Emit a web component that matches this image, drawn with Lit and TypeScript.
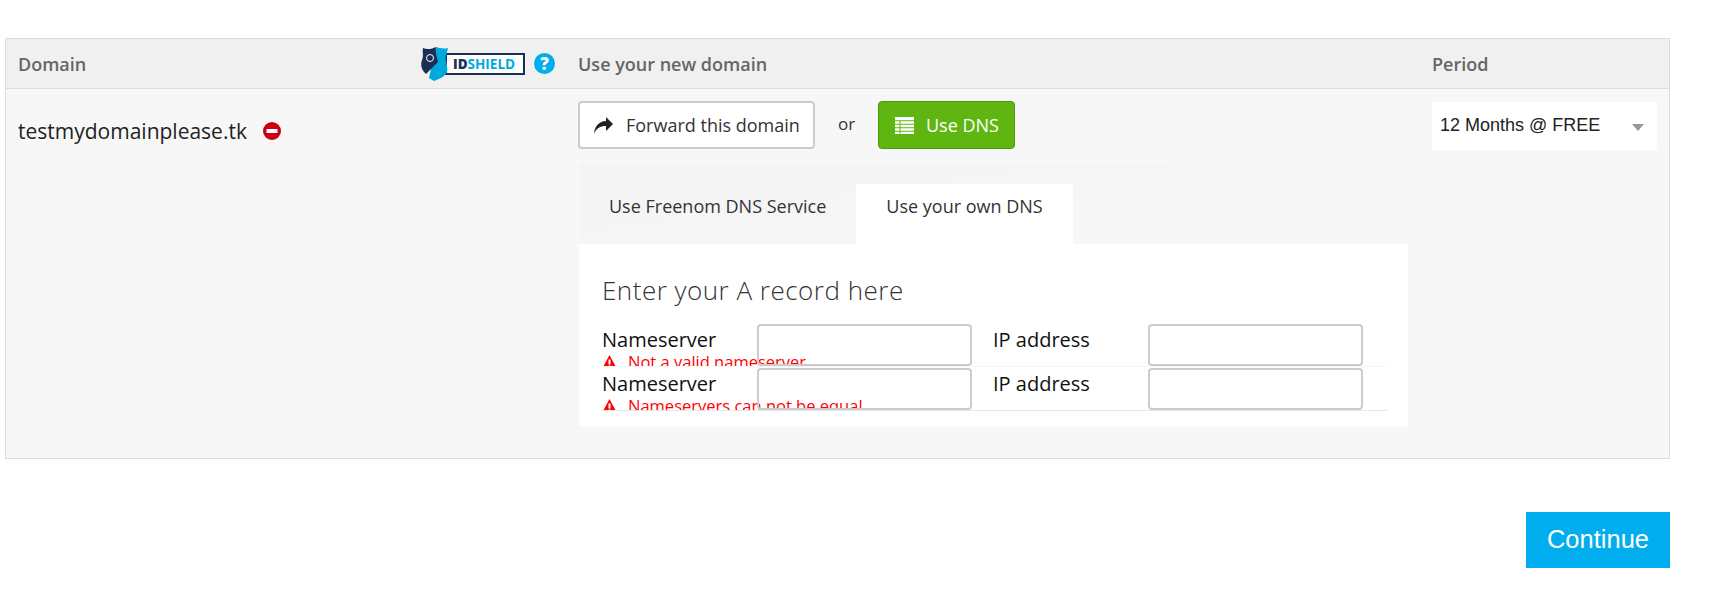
import { css, html, LitElement, svg } from "lit";
import { customElement } from "lit/decorators.js";

const forwardIcon = svg`<path d="M19 7 12 0v4C5 4.500.5 9 0 17c2-5.500 6-8 12-8v5z" fill="#222" />`;
const listIcon = svg`<path fill="#fff" d="M0 0h19v3.200H0zM0 4.200h4.500v2.500H0zM5.500 4.200H19v2.500H5.500zM0 7.700h4.500v2.500H0zM5.500 7.700H19v2.500H5.500zM0 11.200h4.500v2.500H0zM5.500 11.200H19v2.500H5.500zM0 14.700h4.500V17H0zM5.500 14.700H19V17H5.500z" />`;

@customElement("app-root")
export default class AppRoot extends LitElement {
  static styles = css`
    :host {
      display: block;
      padding: 38px 43px 0 5px;
      font-family: "Open Sans", sans-serif;
      color: #222;
    }

    .table {
      border: 1px solid #ddd;
      background: #f7f7f7;
      height: 421px;
      box-sizing: border-box;
    }

    .head,
    .body {
      display: grid;
      grid-template-columns: 572px 854px 1fr;
    }

    .head {
      height: 50px;
      box-sizing: border-box;
      border-bottom: 1px solid #ddd;
      background: #f0f0f0;
      align-items: center;
      font-size: 18px;
      font-weight: 600;
      color: #666;
    }

    .domain-head {
      display: flex;
      align-items: center;
      padding-left: 12px;
      padding-right: 23px;
    }

    .domain-head span {
      flex: 1;
    }

    .shield {
      display: flex;
      align-items: center;
      margin-right: 9px;
    }

    .shield svg {
      display: block;
      margin-right: -4px;
      position: relative;
    }

    .wordmark {
      width: 80px;
      height: 22px;
      box-sizing: border-box;
      border: 2px solid #1b2f55;
      background: #fff;
      font-size: 13.500px;
      line-height: 18px;
      font-weight: 700;
      color: #00a9dc;
      padding-left: 6px;
      white-space: nowrap;
    }

    .wordmark b {
      color: #1b2f55;
    }

    .help {
      width: 21px;
      height: 21px;
      border-radius: 50%;
      background: #00aeef;
      color: #fff;
      font-size: 17px;
      font-weight: 800;
      line-height: 21px;
      text-align: center;
    }

    .domain-name {
      display: flex;
      align-items: center;
      gap: 16px;
      padding: 28px 0 0 12px;
      height: 28px;
      font-size: 21px;
    }

    .stop {
      display: block;
    }

    .main {
      padding-top: 12px;
    }

    .choices {
      display: flex;
      align-items: center;
    }

    .btn {
      height: 48px;
      box-sizing: border-box;
      border-radius: 4px;
      display: flex;
      align-items: center;
      font-size: 18px;
      font-family: inherit;
    }

    .btn.forward {
      width: 237px;
      border: 2px solid #ccc;
      background: #fff;
      color: #333;
      padding-left: 14px;
      gap: 13px;
    }

    .or {
      width: 63px;
      text-align: center;
      font-size: 17px;
      color: #333;
      margin-top: -4px;
    }

    .btn.dns {
      width: 137px;
      border: 1px solid #4c9a0c;
      background: #5fb611;
      color: #fff;
      padding-left: 16px;
      gap: 12px;
    }

    .dns-area {
      margin: 15px 24px 0 1px;
      padding-top: 20px;
      background: linear-gradient(172deg, #f4f4f4 0%, #f7f7f7 45%);
    }

    .tabs {
      display: flex;
      height: 60px;
      font-size: 18px;
      color: #333;
    }

    .tab {
      padding: 10px 30px 0;
      line-height: 24px;
      border-radius: 3px 3px 0 0;
    }

    .tab.active {
      background: #fff;
    }

    .panel {
      background: #fff;
      border-radius: 0 0 4px 4px;
      height: 183px;
      box-sizing: border-box;
      padding: 28px 21px 0 23px;
    }

    h2 {
      margin: 0 0 15px;
      font-size: 26px;
      line-height: 36px;
      font-weight: 300;
      color: #333;
      letter-spacing: 0.5px;
    }

    .row {
      display: grid;
      grid-template-columns: 155px 215px 21px 155px 215px;
      height: 44px;
      box-sizing: border-box;
      overflow: hidden;
      border-bottom: 1px solid #f4f4f4;
      padding-top: 1px;
      color: #111;
    }

    .row + .row {
      border-bottom-color: #e6e6e6;
    }

    .label {
      font-size: 20px;
      line-height: 24px;
      padding-top: 4px;
      white-space: nowrap;
      font-weight: 500;
    }

    .error {
      display: flex;
      align-items: center;
      gap: 11px;
      font-size: 16.500px;
      line-height: 22px;
      font-weight: 400;
      color: #f00;
      margin-top: -1px;
    }

    .error svg {
      flex: none;
    }

    input {
      width: 215px;
      height: 42px;
      box-sizing: border-box;
      border: 2px solid #ccc;
      border-radius: 4px;
      background: transparent;
      margin: 0;
      padding: 0 8px;
    }

    .ip {
      grid-column: 4;
    }

    .select {
      margin-top: 13px;
      width: 225px;
      height: 48px;
      background: #fff;
      display: flex;
      align-items: center;
      justify-content: space-between;
      padding: 0 13px 1px 8px;
      box-sizing: border-box;
      font-family: "Liberation Sans", Arial, sans-serif;
      font-size: 18px;
      color: #222;
    }

    .caret {
      width: 0;
      height: 0;
      border-left: 6.500px solid transparent;
      border-right: 6.500px solid transparent;
      border-top: 7px solid #999;
      margin-top: 3px;
    }

    .actions {
      display: flex;
      justify-content: flex-end;
      margin-top: 53px;
      padding-bottom: 31px;
    }

    .continue {
      width: 144px;
      height: 56px;
      border: 0;
      padding: 0 0 2px;
      background: #00aeef;
      color: #fff;
      font-family: "Liberation Sans", Arial, sans-serif;
      font-size: 25.500px;
    }
  `;

  private renderRow(error: string) {
    return html`
      <div class="row">
        <div class="label">
          Nameserver
          <div class="error">
            <svg width="15" height="14" viewBox="0 0 15 14">
              <path fill="#f00" d="M7.500 0 15 14H0z" />
              <path fill="#fff" d="M6.500 4.500h2v5h-2zM6.500 10.500h2v2h-2z" />
            </svg>
            ${error}
          </div>
        </div>
        <input type="text" />
        <div class="label ip">IP address</div>
        <input type="text" />
      </div>
    `;
  }

  render() {
    return html`
      <div class="table">
        <div class="head">
          <div class="domain-head">
            <span>Domain</span>
            <div class="shield">
              <svg width="28" height="34" viewBox="0 0 28 34">
                <path fill="#00a9dc" d="M15 0c4 1.500 8 2 12 1-1 5-3 8-2 13 1 6 3 10-1 14-3 3-7 4-11 6l-5-3z" />
                <path fill="#1b2f55" d="M15 0C11 2 6 3 2 1 1 6 3 8 1 13c-2 6 0 11 4 14l12-12c-1-5-3-9-2-15z" />
                <circle cx="9" cy="11" r="3.500" fill="none" stroke="#fff" stroke-width="1" />
              </svg>
              <div class="wordmark"><b>ID</b>SHIELD</div>
            </div>
            <div class="help">?</div>
          </div>
          <div>Use your new domain</div>
          <div>Period</div>
        </div>
        <div class="body">
          <div class="domain-name">
            testmydomainplease.tk
            <svg class="stop" width="18" height="18" viewBox="0 0 18 18">
              <circle cx="9" cy="9" r="9" fill="#c90011" />
              <rect x="3.500" y="7" width="11" height="4" fill="#fff" />
            </svg>
          </div>
          <div class="main">
            <div class="choices">
              <div class="btn forward">
                <svg width="19" height="17" viewBox="0 0 19 17">${forwardIcon}</svg>
                Forward this domain
              </div>
              <div class="or">or</div>
              <div class="btn dns">
                <svg width="19" height="17" viewBox="0 0 19 17">${listIcon}</svg>
                Use DNS
              </div>
            </div>
            <div class="dns-area">
              <div class="tabs">
                <div class="tab">Use Freenom DNS Service</div>
                <div class="tab active">Use your own DNS</div>
              </div>
              <div class="panel">
                <h2>Enter your A record here</h2>
                ${this.renderRow("Not a valid nameserver")}
                ${this.renderRow("Nameservers can not be equal")}
              </div>
            </div>
          </div>
          <div>
            <div class="select">
              12 Months @ FREE
              <div class="caret"></div>
            </div>
          </div>
        </div>
      </div>
      <div class="actions">
        <button class="continue">Continue</button>
      </div>
    `;
  }
}
